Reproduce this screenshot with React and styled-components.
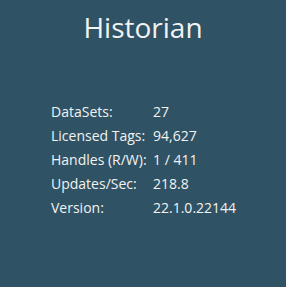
import React from "react";
import styled, { createGlobalStyle } from "styled-components";

const Global = createGlobalStyle`
  html, body { margin: 0; padding: 0; background: #2f5264; }
  body { font-family: "Open Sans", "Noto Sans", sans-serif; }
`;

const Card = styled.div`
  width: 286px;
  height: 287px;
  box-sizing: border-box;
  background: #2f5264;
  color: #f2f2f2;
  display: flex;
  flex-direction: column;
  align-items: center;
  padding-top: 7px;
`;

const Title = styled.h1`
  margin: 0;
  font-weight: 400;
  font-size: 28px;
  line-height: 40px;
  letter-spacing: 0;
`;

const Stats = styled.dl`
  margin: 53px 0 0 0;
  align-self: stretch;
  padding-left: 51px;
  display: grid;
  grid-template-columns: 102px auto;
  row-gap: 0;
  font-size: 14px;
  line-height: 24px;
`;

const Label = styled.dt`
  margin: 0;
`;

const Value = styled.dd`
  margin: 0;
`;

const rows = [
  ["DataSets:", "27"],
  ["Licensed Tags:", "94,627"],
  ["Handles (R/W):", "1 / 411"],
  ["Updates/Sec:", "218.8"],
  ["Version:", "22.1.0.22144"],
];

export default function App() {
  return (
    <>
      <Global />
      <Card>
        <Title>Historian</Title>
        <Stats>
          {rows.map(([k, v]) => (
            <React.Fragment key={k}>
              <Label>{k}</Label>
              <Value>{v}</Value>
            </React.Fragment>
          ))}
        </Stats>
      </Card>
    </>
  );
}
